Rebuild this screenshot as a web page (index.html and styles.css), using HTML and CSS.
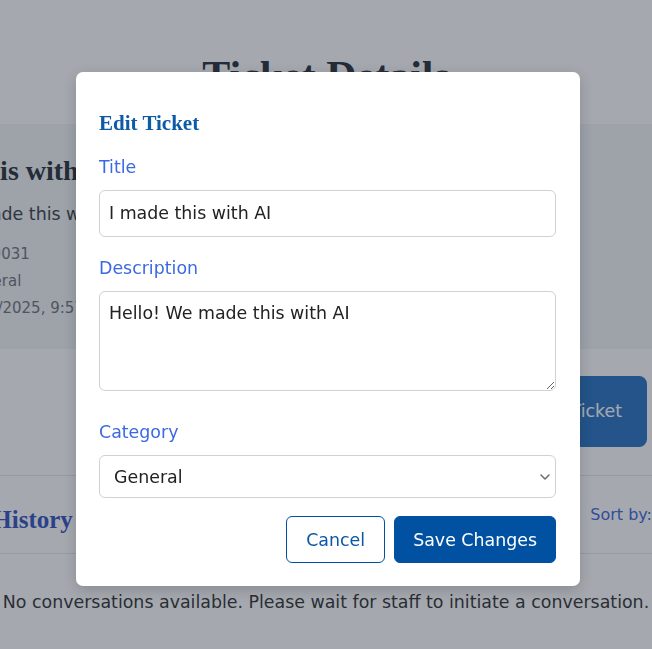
FILE: index.html
```html
<!DOCTYPE html>
<html lang="en">
<head>
<meta charset="utf-8">
<title>Ticket Details</title>
<link rel="stylesheet" href="styles.css">
</head>
<body>
<div class="page-wrap">
  <main class="page">
    <header class="page-head">
      <h1 class="page-title">Ticket Details</h1>
    </header>
    <section class="ticket-card">
      <h2 class="ticket-title">I made this with AI</h2>
      <p class="ticket-desc">Hello! We made this with AI</p>
      <ul class="ticket-meta">
        <li>Ticket ID: #100031</li>
        <li>Category: General</li>
        <li>Created: 01/15/2025, 9:57 AM</li>
      </ul>
    </section>
    <div class="ticket-actions">
      <button class="btn-edit" type="button">Edit Ticket</button>
    </div>
    <section class="history">
      <div class="history-head">
        <h3 class="history-title">Conversation History</h3>
        <div class="sort">
          <span class="sort-label">Sort by:</span>
          <select class="sort-select"><option>Newest first</option></select>
        </div>
      </div>
      <p class="empty">No conversations available. Please wait for staff to initiate a conversation.</p>
    </section>
  </main>
</div>

<div class="overlay">
  <form class="modal">
    <h2 class="modal-title">Edit Ticket</h2>
    <div class="field field-title">
      <label class="field-label" for="t">Title</label>
      <input class="field-input" id="t" type="text" value="I made this with AI">
    </div>
    <div class="field field-desc">
      <label class="field-label" for="d">Description</label>
      <textarea class="field-textarea" id="d">Hello! We made this with AI</textarea>
    </div>
    <div class="field field-cat">
      <label class="field-label" for="c">Category</label>
      <div class="select-wrap">
        <select class="field-select" id="c">
          <option>General</option>
          <option>Technical</option>
          <option>Billing</option>
        </select>
        <svg class="chev" width="10" height="6" viewBox="0 0 10 6" aria-hidden="true">
          <path d="M1 1L5 5L9 1" fill="none" stroke="#6b6b6b" stroke-width="1.5" stroke-linecap="round" stroke-linejoin="round"/>
        </svg>
      </div>
    </div>
    <div class="modal-actions">
      <button class="btn-cancel" type="button">Cancel</button>
      <button class="btn-save" type="button">Save Changes</button>
    </div>
  </form>
</div>
</body>
</html>
```

FILE: styles.css
```css
* { box-sizing: border-box; }

html, body {
  margin: 0;
  padding: 0;
  background: #ffffff;
  overflow: hidden;
  height: 100%;
}

body {
  font-family: "DejaVu Sans", sans-serif;
  color: #333;
}

.page-wrap {
  display: flex;
  justify-content: center;
  width: 100%;
  overflow: hidden;
}

.page {
  flex: none;
  width: 930px;
}

/* header */
.page-head {
  height: 124px;
  padding-top: 51px;
  text-align: center;
}
.page-title {
  margin: 0;
  font-family: "Liberation Serif", serif;
  font-weight: 700;
  font-size: 42px;
  line-height: 50px;
  color: #2b303b;
}

/* card */
.ticket-card {
  background: #f3f4f6;
  padding: 30px 24px 27px;
}
.ticket-title {
  margin: 0 0 15px;
  font-family: "Liberation Serif", serif;
  font-weight: 700;
  font-size: 28px;
  line-height: 34px;
  color: #2b303b;
}
.ticket-desc {
  margin: 0 0 16px;
  font-size: 17.4px;
  line-height: 22px;
  color: #3b3f46;
}
.ticket-meta {
  list-style: none;
  margin: 0;
  padding: 0;
  font-size: 15px;
  line-height: 27px;
  color: #70747b;
}

/* actions */
.ticket-actions {
  display: flex;
  justify-content: flex-end;
  padding: 27px 144px 28px 0;
}
.btn-edit {
  font-family: "DejaVu Sans", sans-serif;
  font-size: 17.4px;
  line-height: 23px;
  padding: 24px 25px;
  border: 0;
  border-radius: 8px;
  background: #2872c0;
  color: #ffffff;
}

/* history */
.history-head {
  display: flex;
  justify-content: space-between;
  align-items: flex-start;
  height: 79px;
  border-top: 1px solid #e5e7eb;
  border-bottom: 1px solid #e5e7eb;
}
.history-title {
  margin: 30px 0 0 -18px;
  font-family: "Liberation Serif", serif;
  font-weight: 700;
  font-size: 25px;
  line-height: 28px;
  color: #3553c0;
}
.sort {
  display: flex;
  align-items: center;
  gap: 8px;
  margin-top: 24px;
  margin-right: 3px;
}
.sort-label {
  font-size: 16px;
  line-height: 20px;
  color: #4066dc;
}
.sort-select {
  font-family: "DejaVu Sans", sans-serif;
  font-size: 15px;
  height: 30px;
  padding: 0 8px;
  border: 1px solid #ccc;
  border-radius: 6px;
  background: #fff;
}
.empty {
  margin: 36px 0 0;
  text-align: center;
  font-size: 17.4px;
  line-height: 24px;
  color: #333;
}

/* overlay + modal */
.overlay {
  position: fixed;
  inset: 0;
  background: rgba(31, 41, 55, 0.4);
  display: flex;
  justify-content: center;
  align-items: flex-start;
  padding: 72px 0 0 4px;
}

.modal {
  width: 504px;
  background: #ffffff;
  border-radius: 7px;
  padding: 23px 24px 23px 23px;
  box-shadow: 0 4px 14px rgba(0, 0, 0, 0.18);
}

.modal-title {
  margin: 16px 0 20px;
  font-family: "Liberation Serif", serif;
  font-weight: 700;
  font-size: 21px;
  line-height: 25px;
  color: #0d5aa7;
}

.field-label {
  display: block;
  margin-bottom: 12px;
  font-size: 17.4px;
  line-height: 22px;
  color: #3b6ae0;
}

.field-title { margin-bottom: 20px; }
.field-desc { margin-bottom: 30px; }

.field-input,
.field-textarea,
.field-select {
  display: block;
  width: 100%;
  font-family: "DejaVu Sans", sans-serif;
  font-size: 17.4px;
  color: #222;
  border: 1px solid #cfd1d5;
  border-radius: 6px;
  background: #fff;
}

.field-input {
  height: 47px;
  padding: 0 9px 2px;
}

.field-textarea {
  height: 100px;
  padding: 11px 9px;
  line-height: normal;
  resize: vertical;
}

.select-wrap {
  position: relative;
}

.field-select {
  height: 43px;
  padding: 0 30px 0 14px;
  appearance: none;
  -webkit-appearance: none;
}

.chev {
  position: absolute;
  right: 6px;
  top: 19px;
  pointer-events: none;
}

.modal-actions {
  display: flex;
  justify-content: flex-end;
  gap: 9px;
  margin-top: 18px;
}

.btn-cancel,
.btn-save {
  height: 47px;
  font-family: "DejaVu Sans", sans-serif;
  font-size: 17.4px;
  border-radius: 6px;
  border: 1px solid #0051a2;
}

.btn-cancel {
  padding: 0 19px;
  background: #fff;
  color: #0b57a4;
}

.btn-save {
  padding: 0 18px;
  background: #0051a2;
  color: #fff;
}
```
